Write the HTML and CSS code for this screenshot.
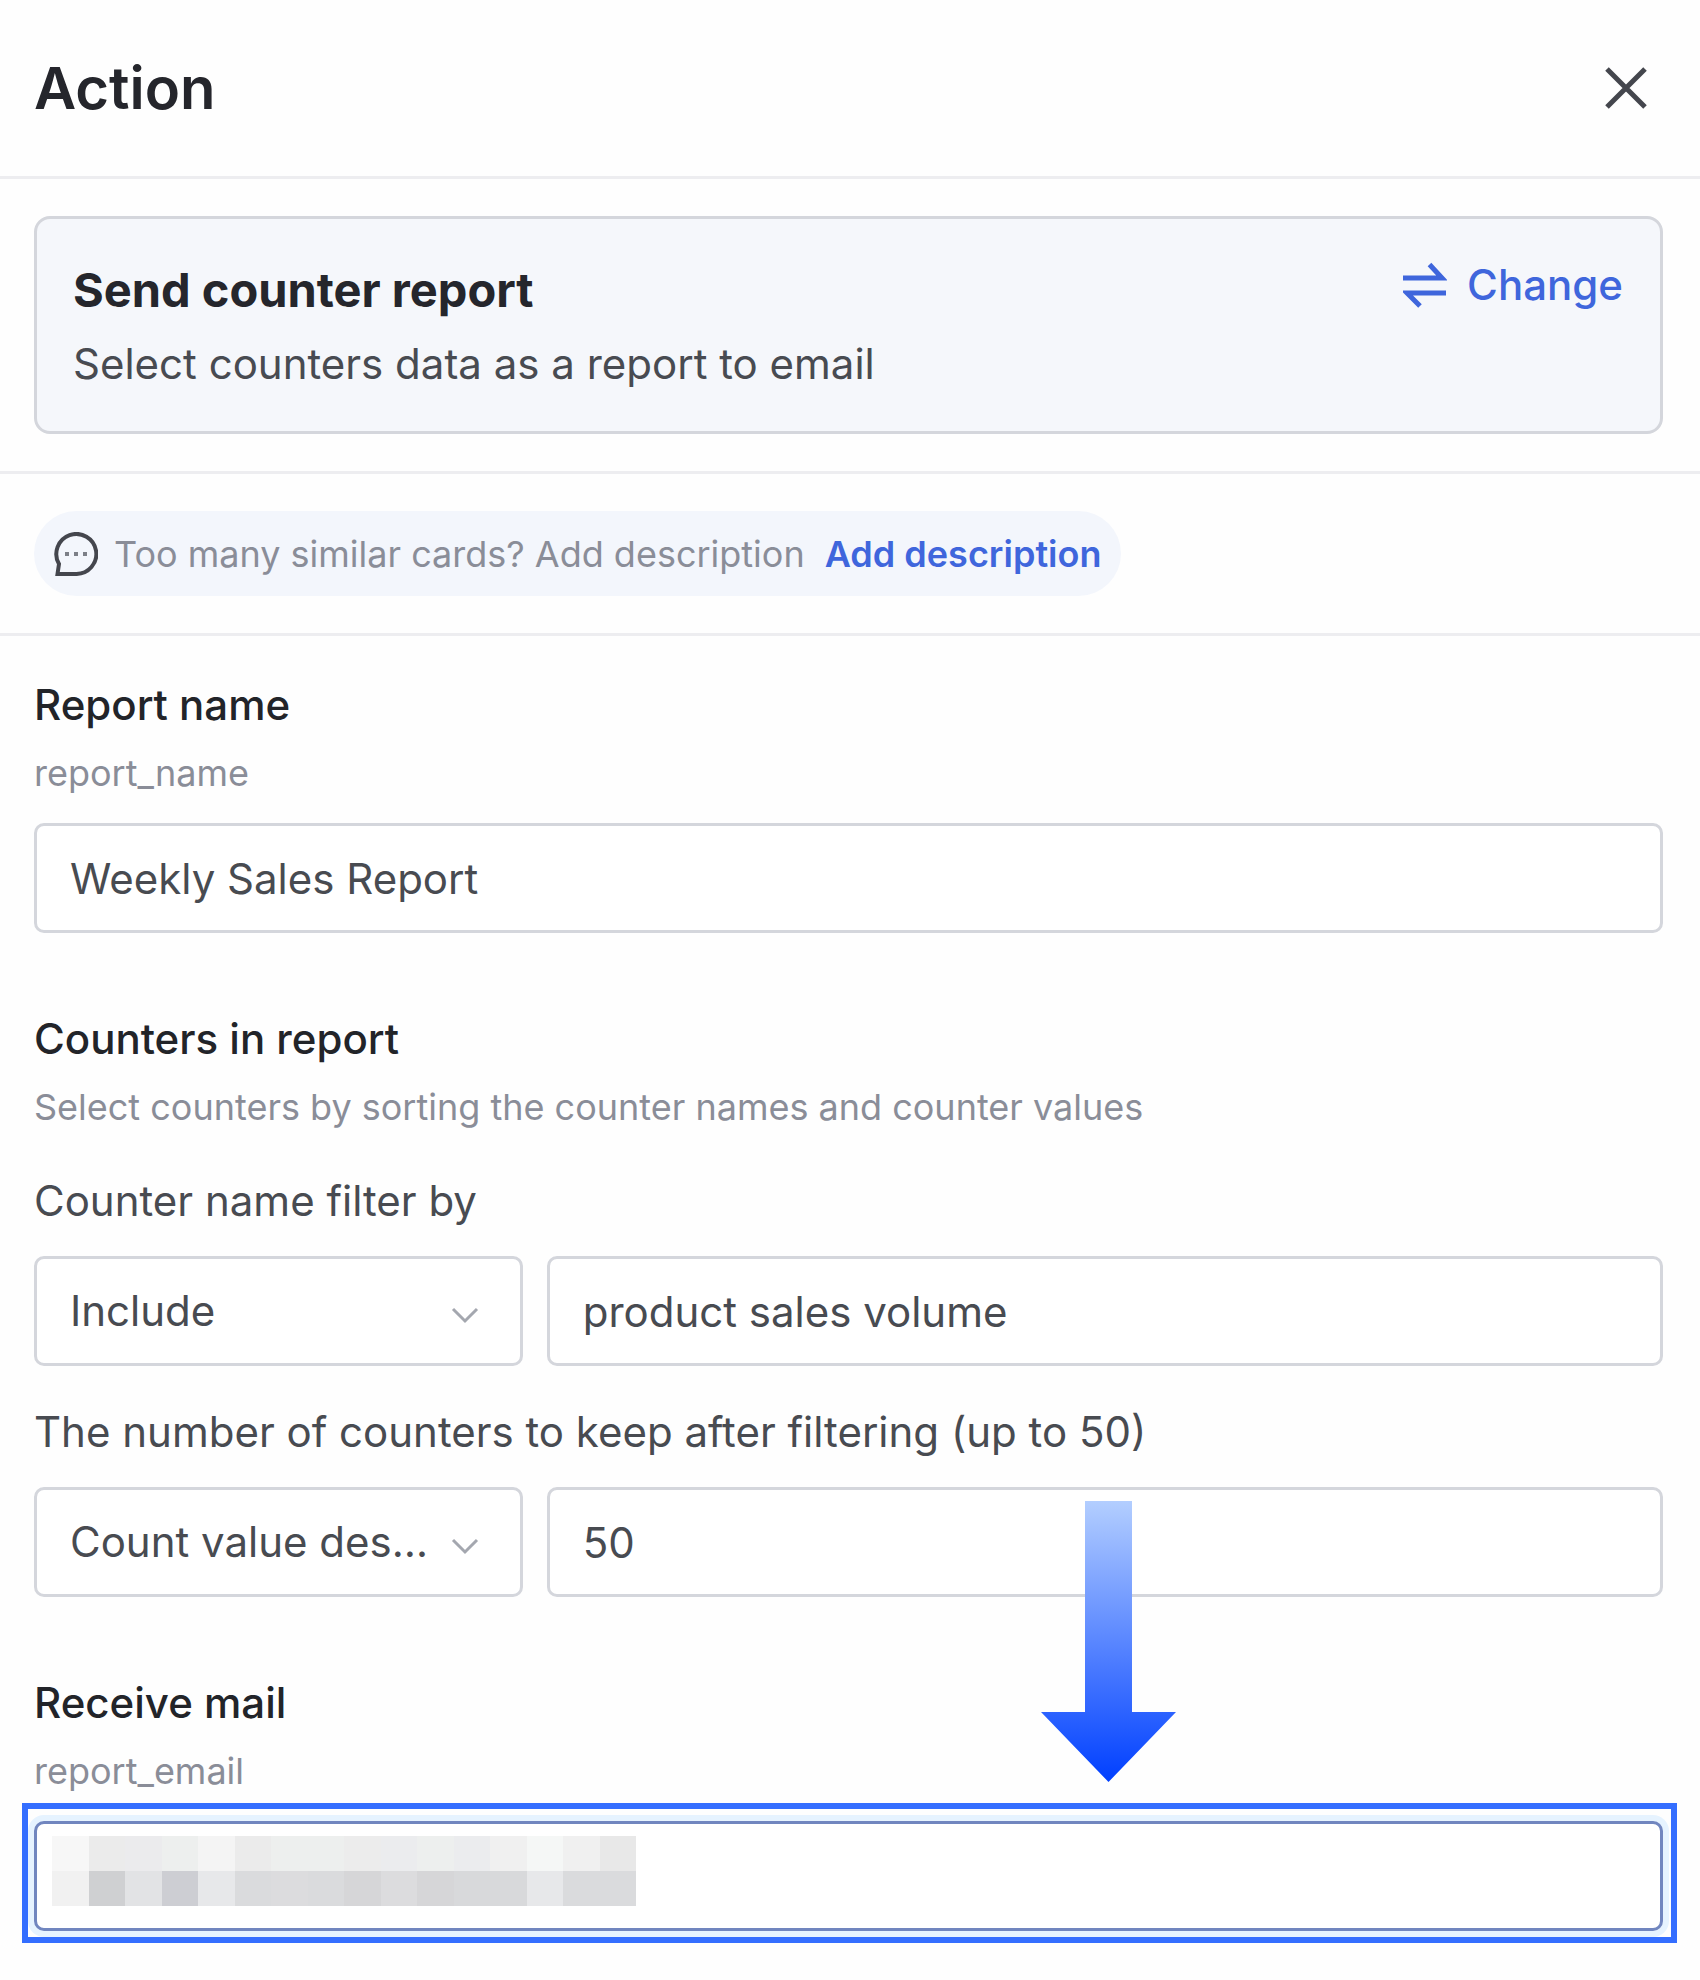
FILE: index.html
```html
<!DOCTYPE html>
<html lang="en">
<head>
    <meta charset="UTF-8">
    <meta name="viewport" content="width=device-width, initial-scale=1.0">
    <title>Action</title>
    <link rel="stylesheet" href="styles.css">
</head>
<body>
    <header class="header">
        <h1>Action</h1>
        <button type="button" class="close" aria-label="Close">
            <svg viewBox="0 0 42 42" width="42" height="42"><path d="M2 2L40 40M40 2L2 40"/></svg>
        </button>
    </header>

    <main>
        <section class="section">
            <div class="card">
                <div class="card-text">
                    <h2>Send counter report</h2>
                    <p>Select counters data as a report to email</p>
                </div>
                <button type="button" class="change">
                    <svg viewBox="0 0 44 46" width="44" height="46"><path d="M0 16H39L26.500 2.500M43 31H4L17 44"/></svg>
                    Change
                </button>
            </div>
        </section>

        <section class="section">
            <div class="tip">
                <svg viewBox="0 0 44 44" width="44" height="44">
                    <path d="M3.500 42L5 32A20 20 0 1 1 22 42Z"/>
                    <path class="dots" d="M11 20h4v4h-4zM20 20h4v4h-4zM29 20h4v4h-4z"/>
                </svg>
                <span>Too many similar cards? Add description</span>
                <a href="#">Add description</a>
            </div>
        </section>

        <form class="form">
            <div class="group">
                <label class="title" for="report-name">Report name</label>
                <p class="hint">report_name</p>
                <input type="text" id="report-name" class="control" value="Weekly Sales Report">
            </div>

            <div class="group">
                <h3 class="title">Counters in report</h3>
                <p class="hint hint-wide">Select counters by sorting the counter names and counter values</p>

                <label class="sub" for="filter-value">Counter name filter by</label>
                <div class="row">
                    <div class="select">
                        <select id="filter-type" class="control" aria-label="Filter type">
                            <option>Include</option>
                            <option>Exclude</option>
                        </select>
                        <svg viewBox="0 0 28 18" width="28" height="18"><path d="M2 3L14 15L26 3"/></svg>
                    </div>
                    <input type="text" id="filter-value" class="control" value="product sales volume">
                </div>

                <label class="sub" for="keep">The number of counters to keep after filtering (up to 50)</label>
                <div class="row">
                    <div class="select">
                        <select id="sort" class="control" aria-label="Sort order">
                            <option>Count value descending</option>
                            <option>Count value ascending</option>
                        </select>
                        <svg viewBox="0 0 28 18" width="28" height="18"><path d="M2 3L14 15L26 3"/></svg>
                    </div>
                    <input type="text" id="keep" class="control" value="50">
                </div>
            </div>

            <div class="group">
                <label class="title" for="report-email">Receive mail</label>
                <p class="hint">report_email</p>
                <div class="mail">
                    <input type="email" id="report-email" class="control active">
                    <!-- masked address -->
                    <svg class="mask" viewBox="0 0 16 2" width="584" height="70" preserveAspectRatio="none" shape-rendering="crispEdges">
                        <path fill="#f7f7f7" d="M0 0h1v1h-1z"/>
                        <path fill="#ebebeb" d="M1 0h1v1h-1zM5 0h1v1h-1z"/>
                        <path fill="#ebebed" d="M2 0h1v1h-1z"/>
                        <path fill="#edefee" d="M3 0h1v1h-1zM6 0h2v1h-2zM10 0h1v1h-1z"/>
                        <path fill="#f4f4f4" d="M4 0h1v1h-1z"/>
                        <path fill="#ececec" d="M8 0h1v1h-1z"/>
                        <path fill="#ebecee" d="M9 0h1v1h-1zM11 0h1v1h-1z"/>
                        <path fill="#f0f0f0" d="M12 0h1v1h-1zM14 0h1v1h-1z"/>
                        <path fill="#f5f7f6" d="M13 0h1v1h-1z"/>
                        <path fill="#e8e8e8" d="M15 0h1v1h-1z"/>
                        <path fill="#f1f1f1" d="M0 1h1v1h-1z"/>
                        <path fill="#cfd0d2" d="M1 1h1v1h-1z"/>
                        <path fill="#e2e3e5" d="M2 1h1v1h-1z"/>
                        <path fill="#cdced3" d="M3 1h1v1h-1z"/>
                        <path fill="#e7e8ea" d="M4 1h1v1h-1zM13 1h1v1h-1z"/>
                        <path fill="#dadbdd" d="M5 1h1v1h-1zM7 1h1v1h-1zM14 1h2v1h-2z"/>
                        <path fill="#dcdcde" d="M6 1h1v1h-1zM9 1h1v1h-1z"/>
                        <path fill="#d6d6d8" d="M8 1h1v1h-1zM10 1h1v1h-1z"/>
                        <path fill="#d8d9db" d="M11 1h2v1h-2z"/>
                    </svg>
                    <div class="highlight"></div>
                    <svg class="arrow" viewBox="0 0 136 282" width="136" height="282">
                        <defs>
                            <linearGradient id="fade" x1="0" y1="0" x2="0" y2="1">
                                <stop offset="0" stop-color="#b3ceff"/>
                                <stop offset="1" stop-color="#003fff"/>
                            </linearGradient>
                        </defs>
                        <path fill="url(#fade)" d="M44 0H91V211H135L67.500 281L0 211H44Z"/>
                    </svg>
                </div>
            </div>
        </form>
    </main>
</body>
</html>
```
FILE: styles.css
```css
* {
    box-sizing: border-box;
}
body {
    font-family: Inter, "Liberation Sans", sans-serif;
    font-size: 42px;
    line-height: 48px;
    background: #fefefe;
    color: #484b51;
    margin: 0;
}
h1, h2, h3, p {
    margin: 0;
}
button {
    background: none;
    border: none;
    padding: 0;
    font: inherit;
    cursor: pointer;
}
svg {
    display: block;
    flex: none;
    fill: none;
}
.header {
    display: flex;
    justify-content: space-between;
    align-items: center;
    padding: 53px 53px 53px 34px;
    border-bottom: 3px solid #ededf0;
}
h1 {
    font-size: 58px;
    line-height: 70px;
    font-weight: 600;
    color: #25262c;
}
.close svg {
    stroke: #44464d;
    stroke-width: 5;
}
.section {
    padding: 37px 37px 37px 34px;
    border-bottom: 3px solid #ededf0;
}
.card {
    display: flex;
    justify-content: space-between;
    align-items: flex-start;
    padding: 42px 37px 43px 36px;
    background: #f5f7fb;
    border: 3px solid #d4d6dc;
    border-radius: 16px;
}
h2 {
    font-size: 47px;
    line-height: 58px;
    font-weight: 700;
    color: #25262c;
    margin-bottom: 21px;
}
.change {
    display: flex;
    align-items: center;
    gap: 20px;
    color: #3f66dc;
    font-weight: 500;
}
.change svg {
    stroke: #3f66dc;
    stroke-width: 5;
}
.tip {
    display: inline-flex;
    align-items: center;
    gap: 16px;
    height: 85px;
    padding: 0 20px;
    border-radius: 43px;
    background: #f3f6fc;
    color: #8a8d98;
    font-size: 36px;
    vertical-align: top;
}
.tip svg {
    stroke: #44464d;
    stroke-width: 4;
}
.tip .dots {
    fill: #7c7f87;
    stroke: none;
}
.tip a {
    margin-left: 4px;
    color: #3f66dc;
    font-weight: 600;
    text-decoration: none;
}
.form {
    display: flex;
    flex-direction: column;
    gap: 82px;
    padding: 45px 37px 46px 34px;
}
.title {
    display: block;
    font-size: 42px;
    font-weight: 500;
    color: #222429;
    margin-bottom: 22px;
}
.hint {
    font-size: 36px;
    line-height: 44px;
    color: #8a8d98;
    margin-bottom: 28px;
}
.hint-wide {
    margin-bottom: 48px;
}
.sub {
    display: block;
    margin-bottom: 31px;
}
.control {
    display: block;
    width: 100%;
    height: 110px;
    padding: 0 33px;
    font: inherit;
    color: inherit;
    background: #fff;
    border: 3px solid #d4d6dc;
    border-radius: 10px;
    outline: none;
}
.row {
    display: grid;
    grid-template-columns: 30% 1fr;
    gap: 24px;
}
.row + .sub {
    margin-top: 42px;
}
.select {
    position: relative;
}
.select .control {
    appearance: none;
    padding-right: 82px;
    text-overflow: ellipsis;
}
.select svg {
    position: absolute;
    right: 44px;
    top: 50px;
    stroke: #a4a7af;
    stroke-width: 3;
    pointer-events: none;
}
.mail {
    position: relative;
}
.active {
    border-color: #7186bf;
    box-shadow: 0 0 0 6px #e6f3ff;
}
.mask {
    position: absolute;
    left: 18px;
    top: 15px;
}
.highlight {
    position: absolute;
    inset: -18px -14px -12px -12px;
    border: 6px solid #346eff;
    pointer-events: none;
}
.arrow {
    position: absolute;
    left: calc(66% - 68px);
    bottom: calc(100% + 38px);
    pointer-events: none;
}
```
